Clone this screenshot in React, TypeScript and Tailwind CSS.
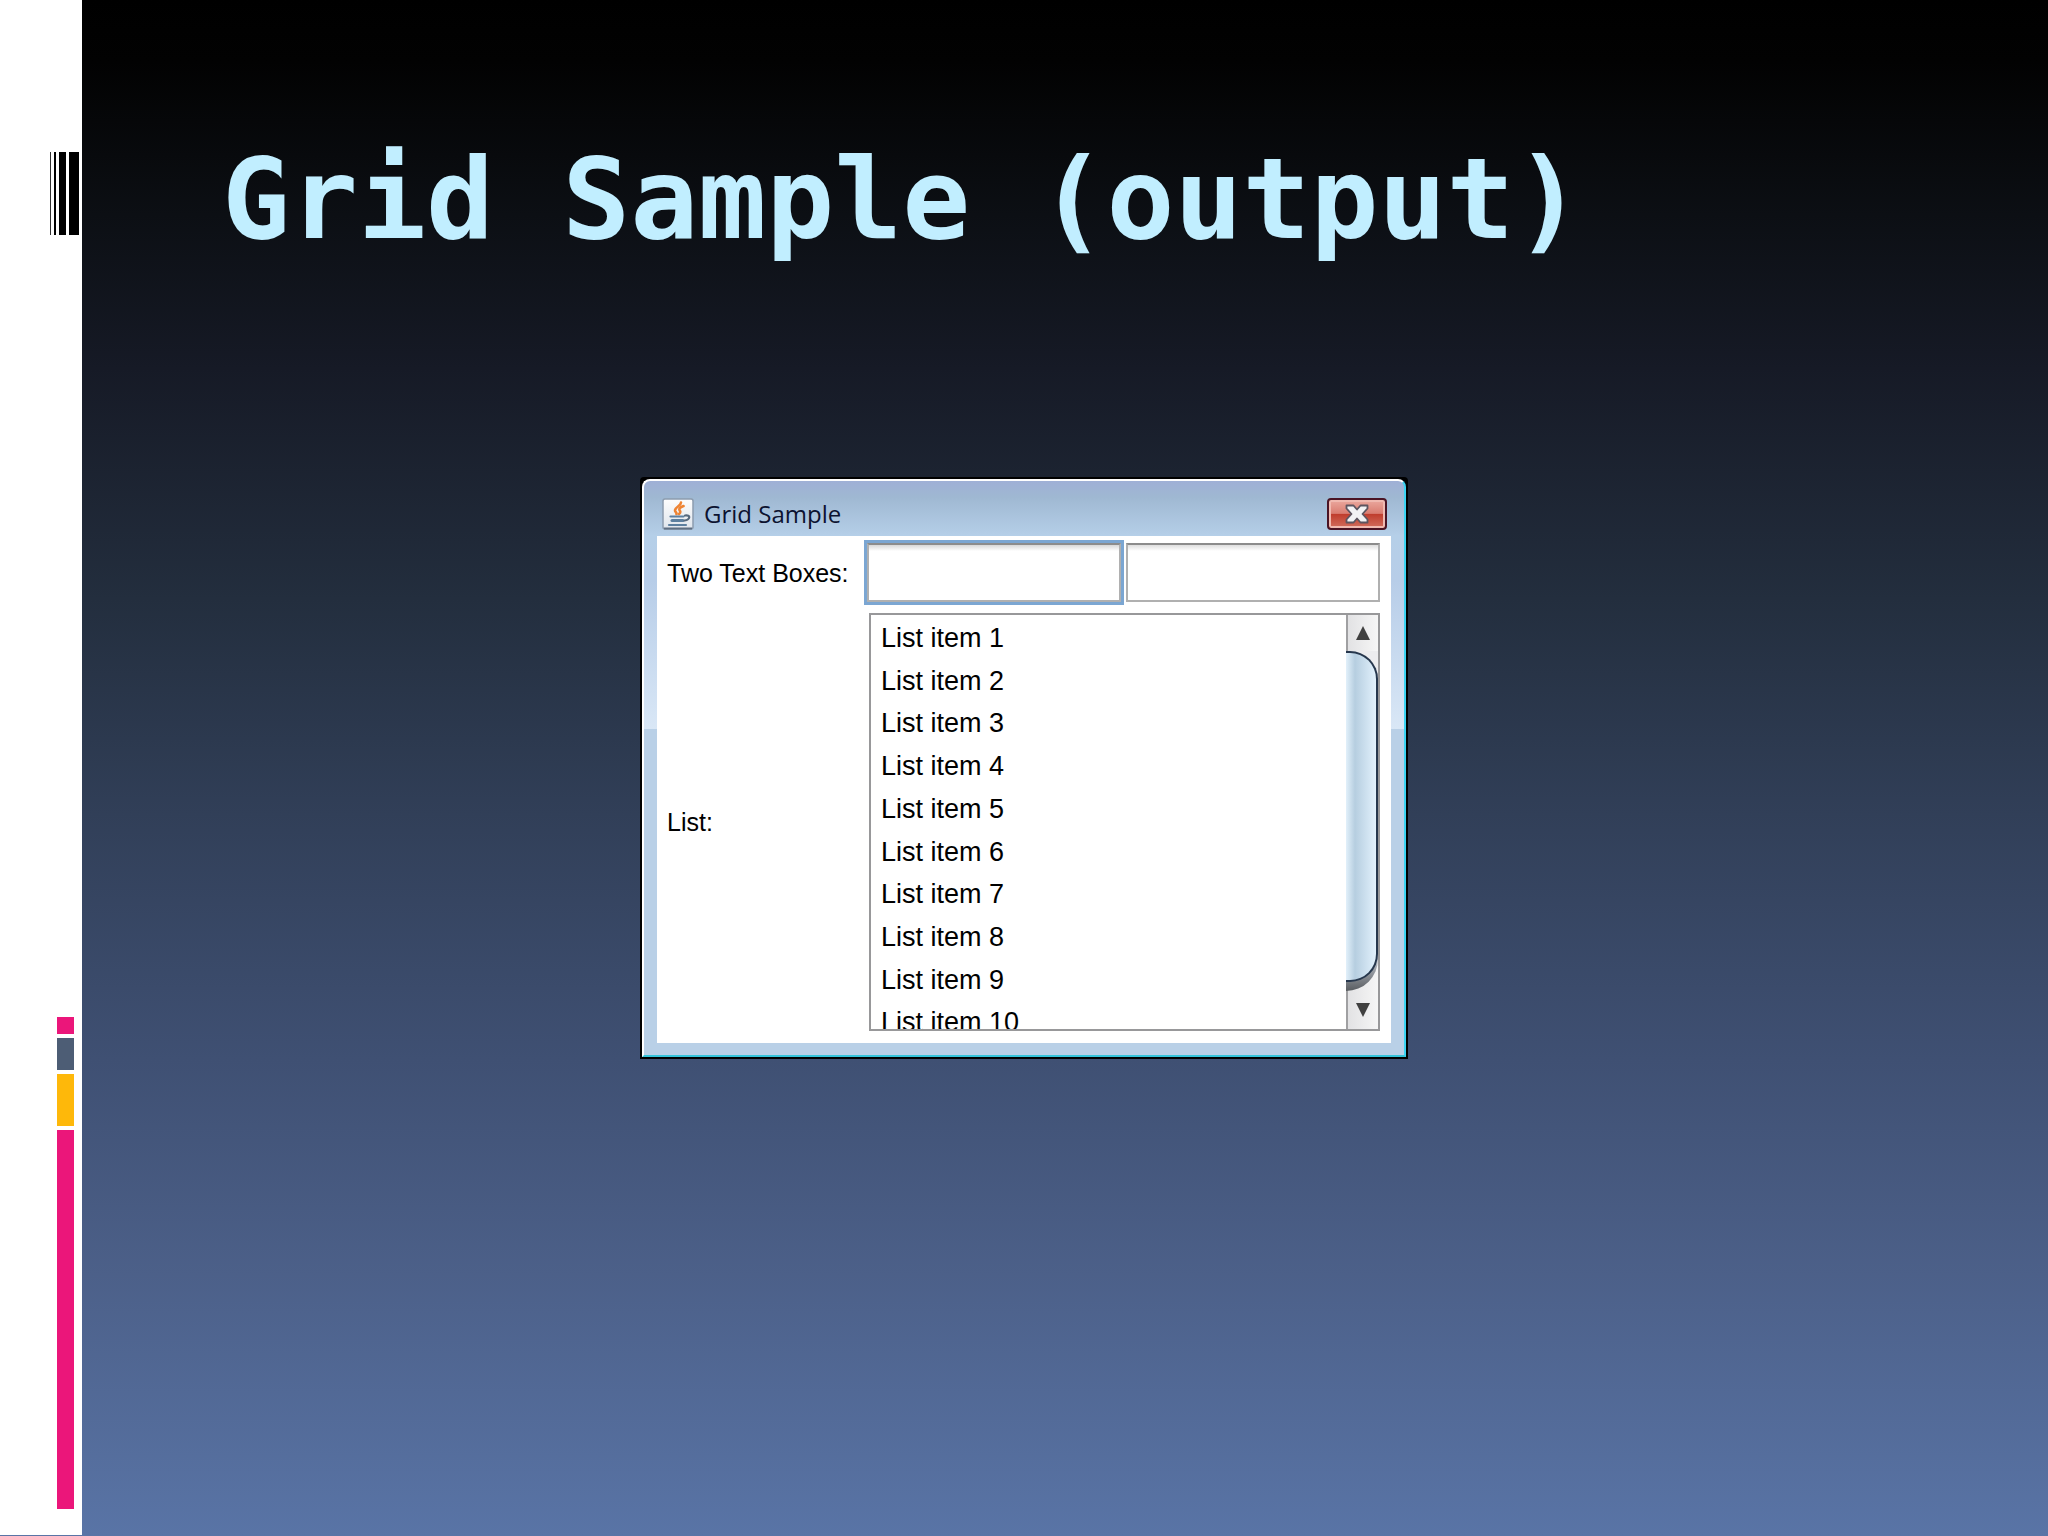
import { useState } from 'react';

const items = Array.from({ length: 10 }, (_, i) => `List item ${i + 1}`);

const JavaIcon = () => (
  <svg viewBox="0 0 32 32" className="size-8 shrink-0" aria-hidden="true">
    <defs>
      <linearGradient id="tile" x1="0" y1="0" x2="0" y2="1">
        <stop offset="0" stopColor="#fdfdfd" />
        <stop offset="1" stopColor="#dfe5ec" />
      </linearGradient>
    </defs>
    <rect x="1" y="1" width="30" height="30" rx="2" fill="url(#tile)" stroke="#8c9cae" strokeWidth="1.5" />
    <path d="M2 30.5h28" stroke="#5e6f82" strokeWidth="2" />
    <g fill="none" stroke="#ee8434" strokeWidth="2.6" strokeLinecap="round">
      <path d="M19 4.500c0 3.500-6 4.500-6 8 0 1.500 2 2 1.500 3.500" />
      <path d="M21.500 8c-4 1.500-5 3-3.500 5 .6 1 .2 2-1 3" />
    </g>
    <g fill="none" stroke="#5c7f9f" strokeWidth="2.2" strokeLinecap="round">
      <path d="M8.500 18.500h13" />
      <path d="M10 22.500h11" strokeWidth="3" />
      <path d="M7 27h17" />
      <path d="M23 17.500c6-1 5.500 4-.5 5" stroke="#56697e" />
    </g>
  </svg>
);

const CloseIcon = () => (
  <svg viewBox="0 0 24 20" className="h-5 w-6" aria-hidden="true">
    <path
      d="M1.500 1.500h7L12 5.500l3.500-4h7v3L17.500 10l5 5.500v3h-7L12 14.500l-3.500 4h-7v-3l5-5.500-5-5.500z"
      fill="#f2f2f4"
      stroke="#5d5560"
      strokeWidth="1.800"
      strokeLinejoin="round"
    />
  </svg>
);

const Sidebar = () => (
  <aside className="flex flex-col justify-between border-b border-[#5974a6] bg-white pt-[152px] pb-[26px]">
    {/* Barcode */}
    <div className="flex h-[83px] justify-end gap-[3px] pr-[3px]">
      <span className="w-px bg-[#333]" />
      <span className="w-[2px] bg-black" />
      <span className="w-[7px] bg-black" />
      <span className="w-[10px] bg-black" />
    </div>

    {/* Accent bars */}
    <div className="ml-[57px] flex w-[17px] flex-col gap-1">
      <span className="h-[17px] bg-[#eb167a]" />
      <span className="h-8 bg-[#4d5d75]" />
      <span className="h-[52px] bg-[#feb80a]" />
      <span className="h-[379px] bg-[#eb167a]" />
    </div>
  </aside>
);

const ScrollBar = () => (
  <div className="flex w-8 shrink-0 flex-col border-l-2 border-[#a0a0a2] bg-gradient-to-r from-[#e2e2e4] to-[#f6f6f6]">
    <button type="button" aria-label="Scroll up" className="flex h-9 items-center justify-center">
      <svg viewBox="0 0 14 14" className="size-[14px]">
        <path d="M7 0l7 14H0z" fill="#404040" />
      </svg>
    </button>
    <div className="-ml-[2px] flex-1 rounded-br-[32px] bg-[linear-gradient(#ececee_50%,#c4c9d2_90%,#585c60)] pb-[9px]">
      <div className="h-full rounded-r-[28px] border-2 border-l-0 border-[#26374d] bg-gradient-to-r from-[#e2f0fa] via-[#b6cee0] via-30% to-[#e2f1fc]" />
    </div>
    <button type="button" aria-label="Scroll down" className="flex h-[38px] items-center justify-center">
      <svg viewBox="0 0 14 14" className="size-[14px]">
        <path d="M7 14L0 0h14z" fill="#404040" />
      </svg>
    </button>
  </div>
);

const GridWindow = () => {
  const [first, setFirst] = useState('');
  const [second, setSecond] = useState('');

  return (
    <section className="w-[768px] rounded-t-[4px] border-2 border-black bg-black">
      <div className="rounded-t-[8px] border-2 border-t-white border-r-[#3cd4f2] border-b-[#35c4da] border-l-white bg-[linear-gradient(#9fb0d6_0px,#9fb8d2_16px,#b5cfe8_55px,#b7cde8_100px,#d9e7f6_248px,#b9d0e7_248px)] px-[13px] pb-3">
        <header className="flex h-[55px] items-end gap-[10px] pr-1 pb-[6px] pl-[5px]">
          <JavaIcon />
          <h2 className="flex-1 font-['Open_Sans',sans-serif] text-2xl/8 text-[#0c1230]">Grid Sample</h2>
          <button
            type="button"
            aria-label="Close"
            className="flex h-8 w-[60px] items-center justify-center rounded-[4px] border-2 border-[#4a1424] bg-[linear-gradient(#eba99f,#d97c70_48%,#bf3c2c_50%,#d26e5e)] shadow-[inset_0_0_0_2px_#f0b9b0]"
          >
            <CloseIcon />
          </button>
        </header>

        <div className="grid grid-cols-[205px_1fr_1fr] items-center gap-x-[5px] gap-y-[11px] bg-white pt-[7px] pr-[11px] pb-3 font-['Liberation_Sans',sans-serif] text-black">
          <label htmlFor="first" className="pt-[2px] pl-[10px] text-[25px] whitespace-nowrap">
            Two Text Boxes:
          </label>
          <input
            id="first"
            type="text"
            value={first}
            onChange={(e) => setFirst(e.target.value)}
            className="h-[59px] w-full min-w-0 border-2 border-[#b0b0b0] border-t-[#8c8c8c] bg-[linear-gradient(#d8d8d8,#fff_6px)] px-2 text-[25px] shadow-[0_0_0_3px_#7ba6d2] outline-none"
          />
          <input
            type="text"
            aria-label="Second text box"
            value={second}
            onChange={(e) => setSecond(e.target.value)}
            className="h-[59px] w-full min-w-0 border-2 border-[#b0b0b0] border-t-[#8c8c8c] bg-[linear-gradient(#dedede,#fff_6px)] px-2 text-[25px] outline-none"
          />

          <span id="list-label" className="pt-[2px] pl-[10px] text-[25px]">
            List:
          </span>
          <div className="col-span-2 ml-[2px] flex h-[418px] overflow-hidden border-2 border-[#98989a]">
            <ul
              role="listbox"
              aria-labelledby="list-label"
              className="mt-[2px] grid h-[427px] flex-1 auto-rows-fr pl-[10px] text-[27px]"
            >
              {items.map((item) => (
                <li key={item} role="option" aria-selected={false} className="flex items-center">
                  {item}
                </li>
              ))}
            </ul>
            <ScrollBar />
          </div>
        </div>
      </div>
    </section>
  );
};

const App = () => (
  <div className="grid min-h-screen grid-cols-[82px_1fr] bg-[linear-gradient(#000_0%,#020202_4%,#0c0f14_14%,#161a26_24%,#232e3e_39%,#313f58_53%,#3f5073_69%,#4c6089_83%,#5974a6_100%)]">
    <Sidebar />
    <main className="grid grid-rows-[1fr_auto_1fr]">
      <h1 className="pt-[143px] pl-[140px] font-['DejaVu_Sans_Mono',monospace] text-[113px] leading-none font-bold whitespace-nowrap text-[#c1eeff]">
        Grid Sample (output)
      </h1>
      <div className="flex justify-center pr-[82px]">
        <GridWindow />
      </div>
    </main>
  </div>
);

export default App;
